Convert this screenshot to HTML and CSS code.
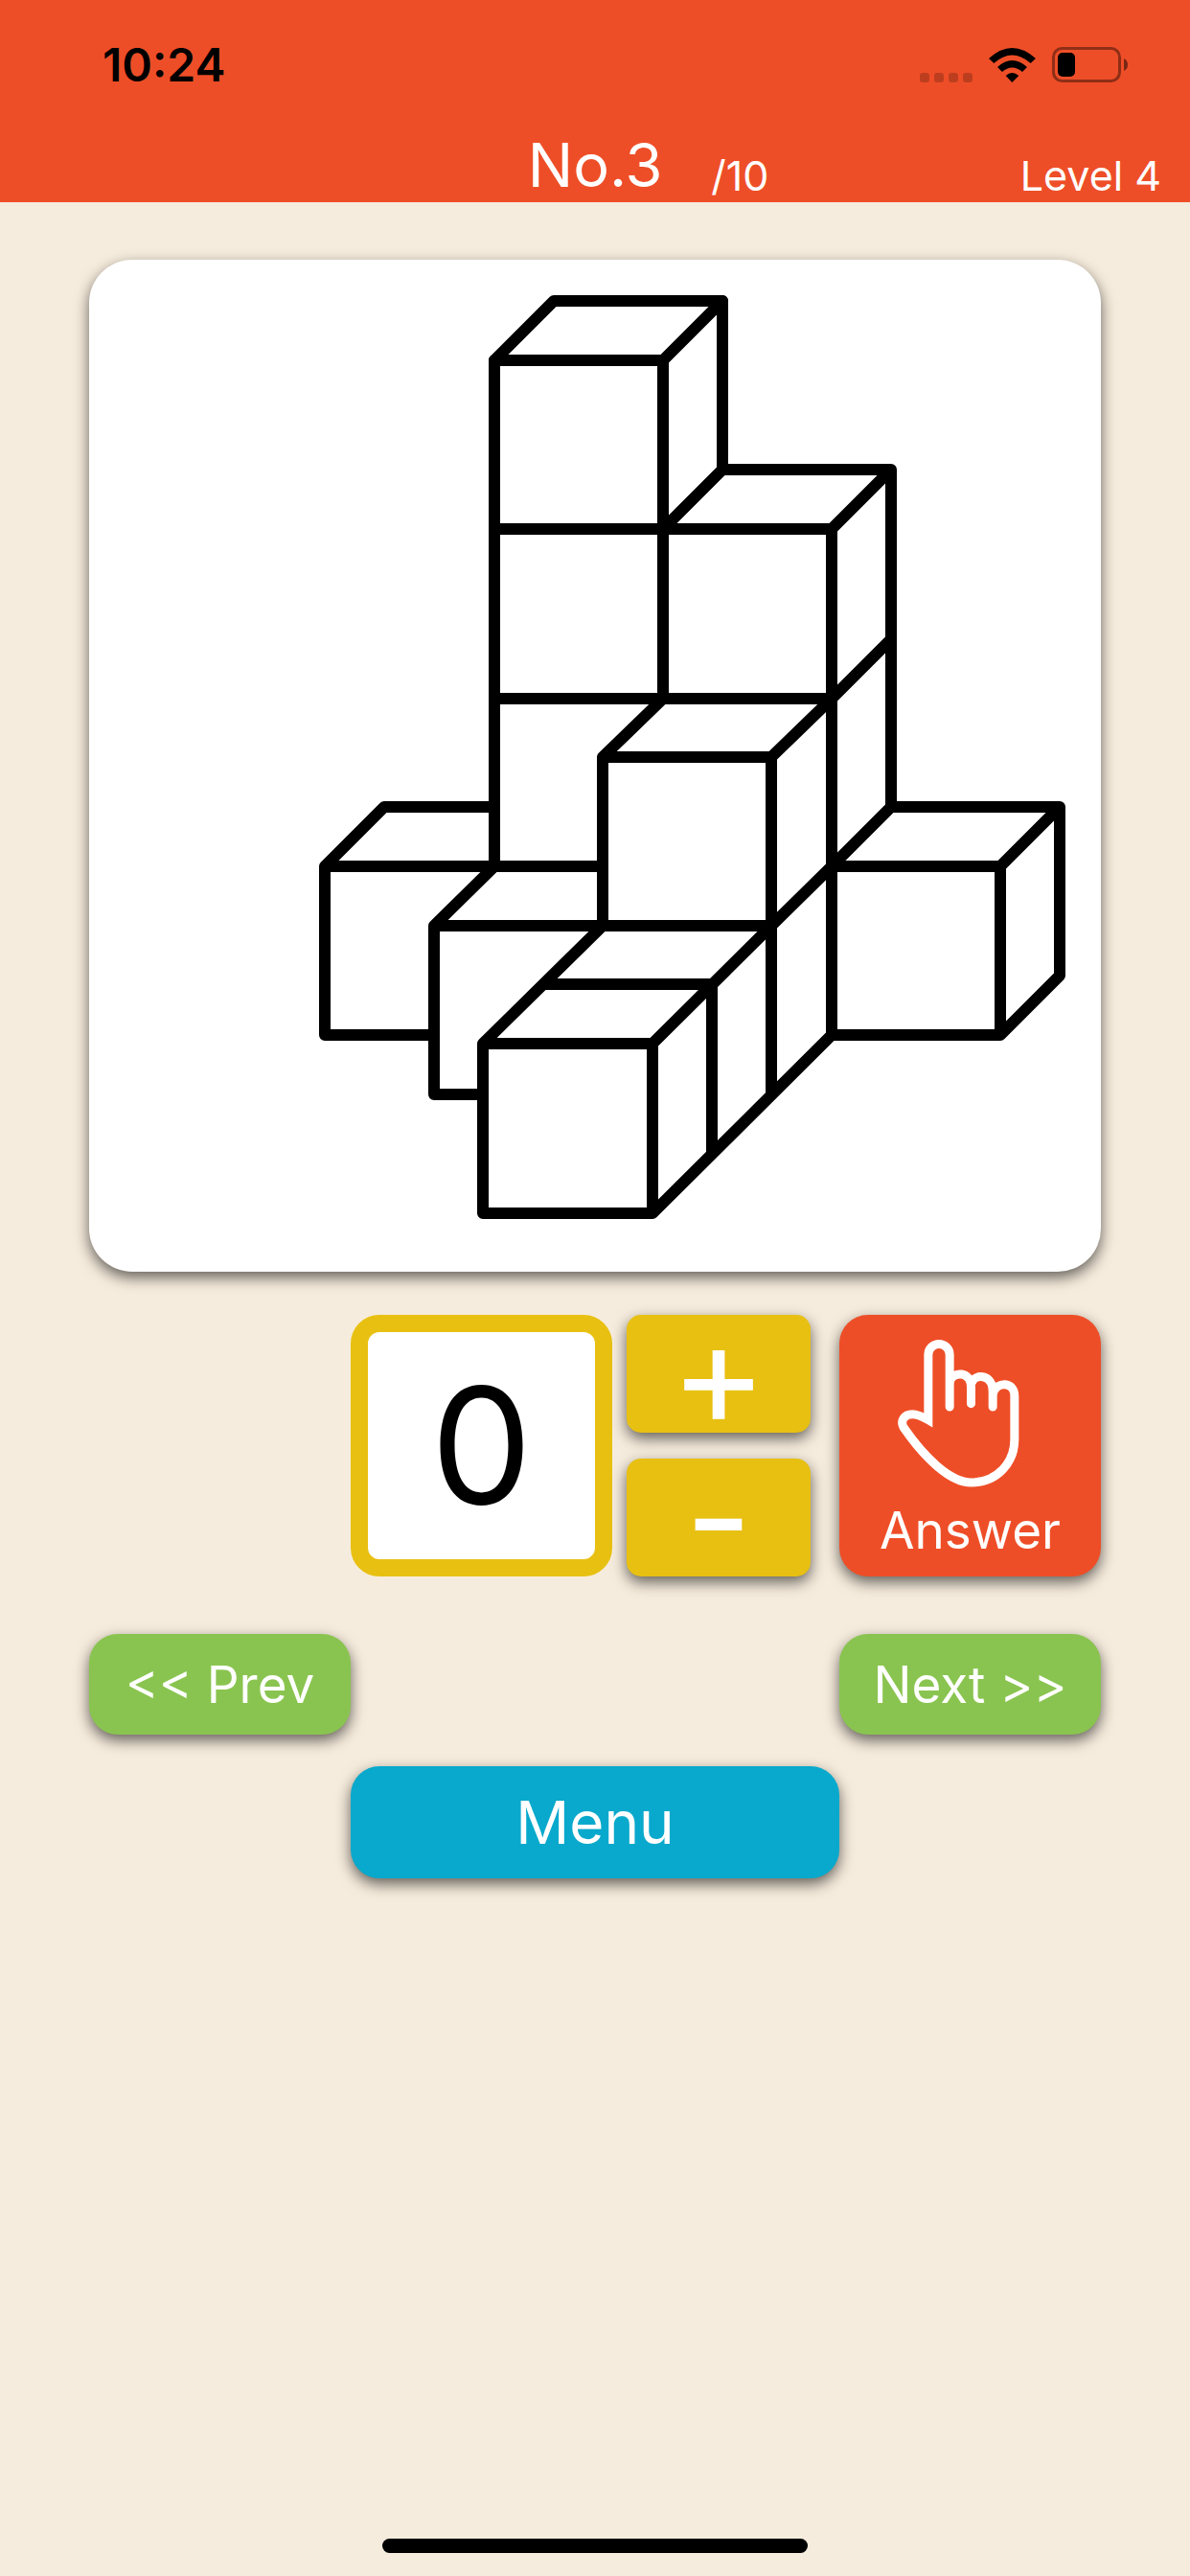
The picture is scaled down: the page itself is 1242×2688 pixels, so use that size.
FILE: index.html
```html
<!DOCTYPE html>
<html lang="en">
<head>
  <meta charset="UTF-8">
  <meta name="viewport" content="width=device-width, initial-scale=1.0">
  <title>Block Counting - Level 4</title>
  <link rel="stylesheet" href="styles.css">
</head>
<body>
  <header class="header">
    <div class="status-bar">
      <span class="clock">10:24</span>
      <div class="status-icons">
        <svg class="signal" viewBox="0 0 55 10" aria-hidden="true">
          <rect x="0" width="10" height="10" rx="3"/>
          <rect x="15" width="10" height="10" rx="3"/>
          <rect x="30" width="10" height="10" rx="3"/>
          <rect x="45" width="10" height="10" rx="3"/>
        </svg>
        <svg class="wifi" viewBox="0 0 147 108" aria-hidden="true">
          <path d="M0 33Q73-33 147 33L131 48Q73-3 16 48Z"/>
          <path d="M27 60Q73 18 120 60L105 75Q73 48 42 75Z"/>
          <path d="M53 87Q73 69 94 87L73 108Z"/>
        </svg>
        <svg class="battery" viewBox="0 0 79 37" aria-hidden="true">
          <rect class="battery-case" x="1.5" y="1.5" width="69" height="34" rx="9"/>
          <path class="battery-cap" d="M75 12Q79 14 79 18.500Q79 23 75 25Z"/>
          <rect x="6" y="6" width="18" height="25" rx="5"/>
        </svg>
      </div>
    </div>
    <div class="title-bar">
      <h1 class="question-no">No.3</h1>
      <div class="title-info">
        <span>/10</span>
        <span>Level 4</span>
      </div>
    </div>
  </header>

  <main class="main">
    <!-- Question figure -->
    <div class="card">
      <svg class="cubes" viewBox="0 0 1056 1056" role="img" aria-label="Stacked cubes">
        <!-- back tower -->
        <path d="M423 633V105L485 43H661V219"/>
        <path d="M423 105H599L661 43M599 105V458M423 281H775M423 458H775"/>
        <!-- right tower -->
        <path d="M599 281L661 219H837V571M775 281L837 219M775 281V809M775 458L837 396"/>
        <!-- right cube -->
        <path d="M775 633L837 571H1013V747L951 809H775M775 633H951V809M951 633L1013 571"/>
        <!-- middle cube -->
        <path d="M536 695V519L599 458M536 519H712L775 458M712 519V871M712 695L775 633"/>
        <!-- left cubes -->
        <path d="M423 571H308L246 633V809H360M246 633H536"/>
        <path d="M423 633L360 695V871H411M360 695H712"/>
        <!-- front cubes -->
        <path d="M536 695L411 818V995H588L775 809M411 818H588V995M588 818L712 695M474 756H650V933"/>
      </svg>
    </div>

    <div class="controls">
      <output class="number">0</output>
      <div class="steps">
        <button type="button" class="step" aria-label="Plus">+</button>
        <button type="button" class="step" aria-label="Minus">-</button>
      </div>
      <button type="button" class="answer">
        <svg class="hand" viewBox="0 0 380 462" aria-hidden="true">
          <path d="M162 210V47A33 33 0 0 0 95 47V251C76 240 62 233 45 233C20 233 6 254 18 275C85 372 165 447 230 447C310 447 365 385 365 312V176C365 130 310 130 298 166"/>
          <path d="M163 129C173 98 229 98 229 148V200M231 134C243 105 297 108 297 162V210"/>
        </svg>
        <span>Answer</span>
      </button>
    </div>

    <nav class="pager">
      <button type="button" class="page-btn">&lt;&lt; Prev</button>
      <button type="button" class="page-btn">Next &gt;&gt;</button>
    </nav>

    <button type="button" class="menu">Menu</button>
  </main>

  <div class="home-bar"></div>
</body>
</html>
```
FILE: styles.css
```css
* {
  box-sizing: border-box;
}
body {
  margin: 0;
  min-height: 100vh;
  display: flex;
  flex-direction: column;
  background-color: #f6ecdd;
  font-family: Inter, "Liberation Sans", sans-serif;
}
button {
  padding: 0;
  border: none;
  color: #fff;
  font-family: inherit;
  cursor: pointer;
  box-shadow: 0 6px 15px rgba(0, 0, 0, 0.6);
}

/* Header */
.header {
  background-color: #ee4e27;
}
.status-bar {
  display: flex;
  justify-content: space-between;
  align-items: center;
  height: 134px;
  padding: 0 65px 0 107px;
}
.clock {
  font-size: 48px;
  font-weight: 600;
}
.status-icons {
  display: flex;
  align-items: flex-end;
  gap: 17px;
}
.signal {
  width: 55px;
  height: 10px;
  opacity: 0.2;
}
.wifi {
  width: 49px;
  height: 36px;
}
.battery {
  width: 79px;
  height: 37px;
}
.battery-case {
  fill: none;
  stroke: #000;
  stroke-width: 3;
  opacity: 0.4;
}
.battery-cap {
  opacity: 0.5;
}
.title-bar {
  display: grid;
  grid-template-columns: 1fr auto 1fr;
  align-items: end;
  height: 77px;
  color: #fff;
}
.question-no {
  grid-column: 2;
  margin: 0;
  font-size: 63px;
  font-weight: 400;
  line-height: 77px;
}
.title-info {
  display: flex;
  justify-content: space-between;
  padding: 0 30px 0 51px;
  font-size: 43px;
  line-height: 56px;
}

/* Question */
.main {
  padding: 60px 93px;
}
.card {
  background-color: #fff;
  border-radius: 45px;
  box-shadow: 0 6px 15px rgba(0, 0, 0, 0.6);
}
.cubes {
  display: block;
  width: 100%;
  fill: none;
  stroke: #000;
  stroke-width: 12;
  stroke-linecap: round;
  stroke-linejoin: round;
}

/* Answer controls */
.controls {
  display: flex;
  justify-content: flex-end;
  margin-top: 45px;
}
.number {
  width: 273px;
  height: 273px;
  border: 18px solid #e8c012;
  border-radius: 30px;
  background-color: #fff;
  font-size: 168px;
  line-height: 237px;
  text-align: center;
}
.steps {
  display: flex;
  flex-direction: column;
  justify-content: space-between;
  margin: 0 30px 0 15px;
}
.step {
  width: 192px;
  height: 123px;
  border-radius: 15px;
  background-color: #e8c012;
  font-size: 152px;
  line-height: 123px;
}
.answer {
  display: flex;
  flex-direction: column;
  align-items: center;
  width: 273px;
  height: 273px;
  padding: 26px 25px 0 0;
  border-radius: 30px;
  background-color: #ee4e27;
  font-size: 53px;
  line-height: 66px;
}
.answer span {
  margin: 12px 0 0 25px;
}
.hand {
  width: 127px;
  height: 154px;
  fill: none;
  stroke: #fff;
  stroke-width: 27;
  stroke-linecap: round;
}

/* Navigation */
.pager {
  display: flex;
  justify-content: space-between;
  margin-top: 60px;
}
.page-btn {
  width: 273px;
  height: 105px;
  border-radius: 30px;
  background-color: #8ac450;
  font-size: 53px;
}
.menu {
  display: block;
  width: 510px;
  height: 117px;
  margin: 33px auto 0;
  border-radius: 30px;
  background-color: #08a9cc;
  font-size: 62px;
}
.home-bar {
  width: 444px;
  height: 15px;
  margin: auto auto 24px;
  border-radius: 8px;
  background-color: #000;
}
```
